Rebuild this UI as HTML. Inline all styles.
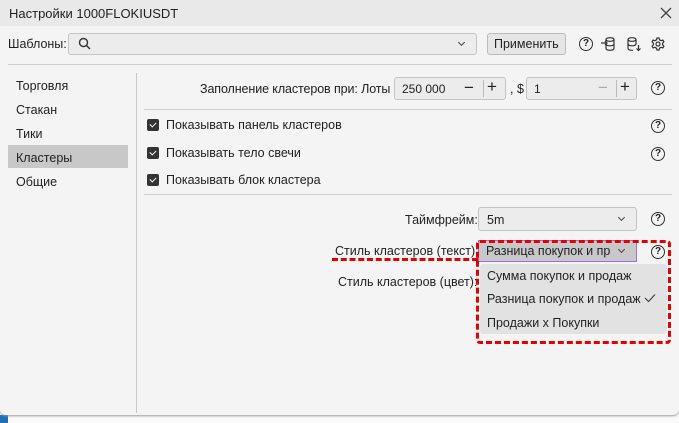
<!DOCTYPE html>
<html><head><meta charset="utf-8"><style>
*{box-sizing:border-box;margin:0;padding:0}
body{width:679px;height:423px;overflow:hidden;background:#fafafa;font-family:"Liberation Sans",sans-serif;font-size:12.5px;color:#222;position:relative}
.dlg{position:absolute;left:0;top:0;width:679px;height:415px;background:#f4f4f4;border-radius:0 0 6px 6px;overflow:hidden;box-shadow:0 1px 2px #999}
.title{position:absolute;left:0;top:0;width:679px;height:26px;background:#e9e9e9;}
.a{position:absolute;white-space:nowrap}
.box{position:absolute;border:1px solid #c4c4c4;background:#ececec;border-radius:3px}
.hl{position:absolute;height:1px;background:#cfcfcf}
.help{position:absolute;width:14px;height:14px;border:1.3px solid #333;border-radius:50%;font-size:10px;text-align:center;line-height:12px;font-weight:bold}
.cb{position:absolute;left:147px;width:12px;height:12px;background:#333;border-radius:2px}
.cb:after{content:"";position:absolute;left:3.5px;top:2px;width:3px;height:5px;border:solid #fff;border-width:0 1.5px 1.5px 0;transform:rotate(45deg)}
.chev{position:absolute;width:6px;height:6px;border:solid #444;border-width:0 1.3px 1.3px 0;transform:rotate(45deg)}
.dash{position:absolute;border:3px dashed #e80000}
</style></head><body>
<div class="a" style="left:0;top:415px;width:8px;height:8px;background:#1e6fb8"></div>
<div class="dlg">
<div class="title"></div>
<div class="a" style="left:9px;top:6px;font-size:13px">Настройки 1000FLOKIUSDT</div>
<svg class="a" style="left:660px;top:7px" width="12" height="12" stroke="#444" stroke-width="1.3"><path d="M1 1L11 11M11 1L1 11"/></svg>

<div class="a" style="left:8px;top:37px">Шаблоны:</div>
<div class="box" style="left:68px;top:33px;width:409px;height:22px"></div>
<svg class="a" style="left:78px;top:37px" width="14" height="14"><circle cx="5.5" cy="5.5" r="4" stroke="#333" stroke-width="1.4" fill="none"/><path d="M8.5 8.5L12 12" stroke="#333" stroke-width="1.4"/></svg>
<div class="chev" style="left:459px;top:40px;width:5px;height:5px"></div>
<div class="box" style="left:487px;top:33px;width:79px;height:22px;background:#e6e6e6;border-color:#bbb"></div>
<div class="a" style="left:494px;top:37px">Применить</div>
<div class="help" style="left:579px;top:37px">?</div>
<svg class="a" style="left:600px;top:36px" width="16" height="16" fill="none" stroke="#333" stroke-width="1.2"><ellipse cx="10" cy="3.5" rx="4" ry="1.8"/><path d="M6 3.5v9c0 1 1.8 1.8 4 1.8s4-.8 4-1.8v-9M6 8c0 1 1.8 1.8 4 1.8s4-.8 4-1.8"/><path d="M1 7h6M5 5l2 2-2 2"/></svg>
<svg class="a" style="left:626px;top:36px" width="16" height="16" fill="none" stroke="#333" stroke-width="1.2"><ellipse cx="6" cy="3.5" rx="4" ry="1.8"/><path d="M2 3.5v9c0 1 1.8 1.8 4 1.8h1M10 3.5v5M2 8c0 1 1.8 1.8 4 1.8s4-.8 4-1.8M12.5 9v5.5M10.5 12.5l2 2 2-2"/></svg>
<svg class="a" style="left:651px;top:37px" width="14" height="14" fill="none" stroke="#333" stroke-width="1.2"><circle cx="7" cy="7" r="2"/><path d="M6 1h2l.5 1.8 1.6.9 1.8-.6 1 1.7-1.3 1.4v1.6l1.3 1.4-1 1.7-1.8-.6-1.6.9L8 13H6l-.5-1.8-1.6-.9-1.8.6-1-1.7 1.3-1.4V6.2L1.1 4.8l1-1.7 1.8.6 1.6-.9z"/></svg>
<div class="hl" style="left:8px;top:64px;width:664px"></div>

<div class="a" style="left:16px;top:79px">Торговля</div>
<div class="a" style="left:16px;top:103px">Стакан</div>
<div class="a" style="left:16px;top:127px">Тики</div>
<div class="a" style="left:8px;top:145px;width:120px;height:23px;background:#c8c8c8"></div>
<div class="a" style="left:16px;top:151px">Кластеры</div>
<div class="a" style="left:16px;top:175px">Общие</div>
<div class="a" style="left:136px;top:73px;width:1px;height:340px;background:#c8c8c8"></div>

<div class="a" style="left:200px;top:82px;letter-spacing:-0.1px">Заполнение кластеров при: Лоты</div>
<div class="box" style="left:394px;top:77px;width:112px;height:23px"></div>
<div class="a" style="left:402px;top:82px;font-size:12px">250 000</div>
<div class="a" style="left:464px;top:78px;font-size:17px">−</div>
<div class="a" style="left:483px;top:80px;width:1px;height:17px;background:#bbb"></div>
<div class="a" style="left:487px;top:77px;font-size:17px">+</div>
<div class="a" style="left:510px;top:82px">, $</div>
<div class="box" style="left:526px;top:77px;width:111px;height:23px"></div>
<div class="a" style="left:534px;top:82px;font-size:12px">1</div>
<div class="a" style="left:598px;top:78px;font-size:17px;color:#aaa">−</div>
<div class="a" style="left:616px;top:80px;width:1px;height:17px;background:#bbb"></div>
<div class="a" style="left:620px;top:77px;font-size:17px">+</div>
<div class="help" style="left:651px;top:81px">?</div>
<div class="hl" style="left:144px;top:109px;width:528px"></div>

<div class="cb" style="top:119px"></div><div class="a" style="left:166px;top:118px">Показывать панель кластеров</div>
<div class="cb" style="top:147px"></div><div class="a" style="left:166px;top:146px">Показывать тело свечи</div>
<div class="cb" style="top:174px"></div><div class="a" style="left:166px;top:173px">Показывать блок кластера</div>
<div class="help" style="left:651px;top:119px">?</div>
<div class="help" style="left:651px;top:147px">?</div>
<div class="hl" style="left:144px;top:194px;width:528px"></div>

<div class="a" style="left:405px;top:213px">Таймфрейм:</div>
<div class="box" style="left:478px;top:207px;width:159px;height:24px"></div>
<div class="a" style="left:487px;top:213px">5m</div>
<div class="chev" style="left:619px;top:215px;width:5px;height:5px"></div>
<div class="help" style="left:651px;top:212px">?</div>

<div class="a" style="left:335px;top:244px">Стиль кластеров (текст):</div>
<div class="a" style="left:478px;top:240px;width:159px;height:22px;background:#c8c8c8;border:1px solid #9c6cf0"></div>
<div class="a" style="left:486px;top:244px">Разница покупок и пр</div>
<div class="chev" style="left:619px;top:247px;width:5px;height:5px"></div>
<div class="help" style="left:651px;top:245px">?</div>
<div class="a" style="left:338px;top:275px">Стиль кластеров (цвет):</div>

<div class="a" style="left:480px;top:264px;width:187px;height:70px;background:#e2e2e2;border-radius:3px"></div>
<div class="a" style="left:487px;top:269px">Сумма покупок и продаж</div>
<div class="a" style="left:487px;top:292px">Разница покупок и продаж</div>
<svg class="a" style="left:644px;top:293px" width="12" height="10" fill="none" stroke="#444" stroke-width="1.2"><path d="M1 5l3.5 3.5L11 1.5"/></svg>
<div class="a" style="left:487px;top:316px">Продажи х Покупки</div>

<div class="dash" style="left:476px;top:240px;width:195px;height:104px;border-radius:4px"></div>
<div class="a" style="left:332px;top:258px;width:146px;height:0;border-top:3px dashed #e80000"></div>
</div>
</body></html>
